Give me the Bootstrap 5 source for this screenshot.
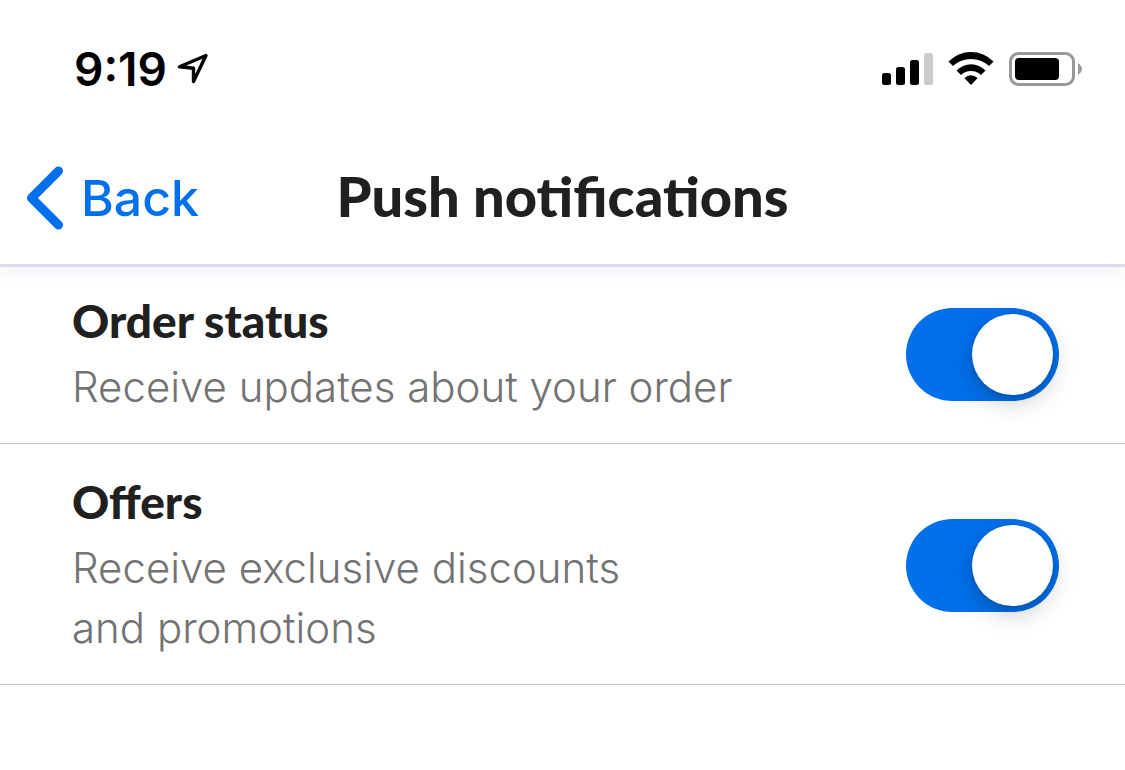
<!DOCTYPE html>
<html lang="en">
<head>
<meta charset="utf-8">
<meta name="viewport" content="width=device-width, initial-scale=1">
<title>Push notifications</title>
<link href="https://cdn.jsdelivr.net/npm/bootstrap@5.3.0/dist/css/bootstrap.min.css" rel="stylesheet">
<style>
  :root { --brand: #0070eb; --ink: #202020; }
  body { font-family: Inter, "Liberation Sans", sans-serif; background: #fff; color: var(--ink); }
  .status-bar { padding: 39px 42px 33px 74px; color: #000; }
  .clock { font-size: 46px; line-height: 60px; font-weight: 600; }
  .app-header { display: grid; grid-template-columns: 1fr auto 1fr; align-items: start; padding: 32px 26px; box-shadow: 0 3px 0 #dddbe8, 0 6px 18px rgba(90, 80, 190, .1); clip-path: inset(0 0 -32px 0); }
  .back-link { font-size: 50px; line-height: 68px; font-weight: 500; color: var(--brand); gap: 18px; }
  .screen-title { font-family: Lato, sans-serif; font-weight: 900; font-size: 56px; line-height: 64px; }
  .settings-list { margin-top: -1px; }
  .setting { padding: 28px 66px 26px 72px; border-bottom: 1px solid #c4c4c4; }
  .setting-name { font-family: Lato, sans-serif; font-weight: 900; font-size: 46px; line-height: 60px; }
  .setting-note { font-size: 42px; line-height: 60px; font-weight: 350; color: #737373; margin-top: 6px; }
  .toggle.form-check-input { display: flex; flex: none; float: none; width: 153px; height: 93px; margin: 0; padding: 6px; border: 0; border-radius: 47px; background: #c8c8c8; }
  .toggle.form-check-input::before { content: ""; width: 81px; height: 81px; border-radius: 50%; background: #fff; box-shadow: 0 8px 24px rgba(0, 0, 0, .2), 0 2px 6px rgba(0, 0, 0, .15); }
  .toggle.form-check-input:checked { background: var(--brand); justify-content: flex-end; }
</style>
</head>
<body>
<div class="status-bar d-flex align-items-center justify-content-between">
  <div class="d-flex align-items-center gap-2">
    <span class="clock">9:19</span>
    <svg width="36" height="36" viewBox="0 0 36 36" fill="none" stroke="#000" stroke-width="3.4" stroke-linejoin="round" aria-hidden="true"><path d="M31 4.500 4.500 15.800 18.500 17.200 18.500 30.500Z"/></svg>
  </div>
  <div class="d-flex align-items-center">
    <svg width="202" height="36" viewBox="0 0 202 36" role="img" aria-label="Signal, Wi-Fi and battery">
      <rect x="1" y="22" width="9" height="12" rx="2.500"/><rect x="15" y="16" width="9" height="18" rx="2.500"/><rect x="29" y="9" width="9" height="25" rx="2.500"/><rect x="43" y="2" width="9" height="32" rx="2.500" fill="#cbcbcb"/>
      <path d="M67.500 10.500A31.500 31.500 0 0 1 112.500 10.500L108 15A26.500 26.500 0 0 0 72 15Z"/>
      <path d="M75.500 19.500A20 20 0 0 1 104.500 19.500L100 24A14.500 14.500 0 0 0 80 24Z"/>
      <path d="M83.300 27Q90 21.500 96.700 27L90 34Z"/>
      <rect x="129.500" y="2.500" width="63" height="31" rx="8" fill="none" stroke="#999" stroke-width="3"/>
      <rect x="134" y="7" width="44" height="22" rx="4"/>
      <path d="M197 12Q205 18 197 24Z" fill="#999"/>
    </svg>
  </div>
</div>
<header class="app-header">
  <a href="#" class="back-link d-flex align-items-center text-decoration-none">
    <svg width="37" height="64" viewBox="0 0 37 64" fill="none" stroke="currentColor" stroke-width="9" stroke-linecap="round" stroke-linejoin="round" aria-hidden="true"><path d="M32.500 5 5.500 32 32.500 59"/></svg>
    <span>Back</span>
  </a>
  <h1 class="screen-title m-0">Push notifications</h1>
</header>
<main class="settings-list">
  <div class="setting d-flex align-items-center justify-content-between">
    <label for="order-status">
      <span class="setting-name d-block">Order status</span>
      <span class="setting-note d-block">Receive updates about your order</span>
    </label>
    <input class="form-check-input toggle" type="checkbox" role="switch" id="order-status" checked>
  </div>
  <div class="setting d-flex align-items-center justify-content-between">
    <label for="offers">
      <span class="setting-name d-block">Offers</span>
      <span class="setting-note d-block">Receive exclusive discounts<br>and promotions</span>
    </label>
    <input class="form-check-input toggle" type="checkbox" role="switch" id="offers" checked>
  </div>
</main>
<script src="https://cdn.jsdelivr.net/npm/bootstrap@5.3.0/dist/js/bootstrap.bundle.min.js"></script>
</body>
</html>
